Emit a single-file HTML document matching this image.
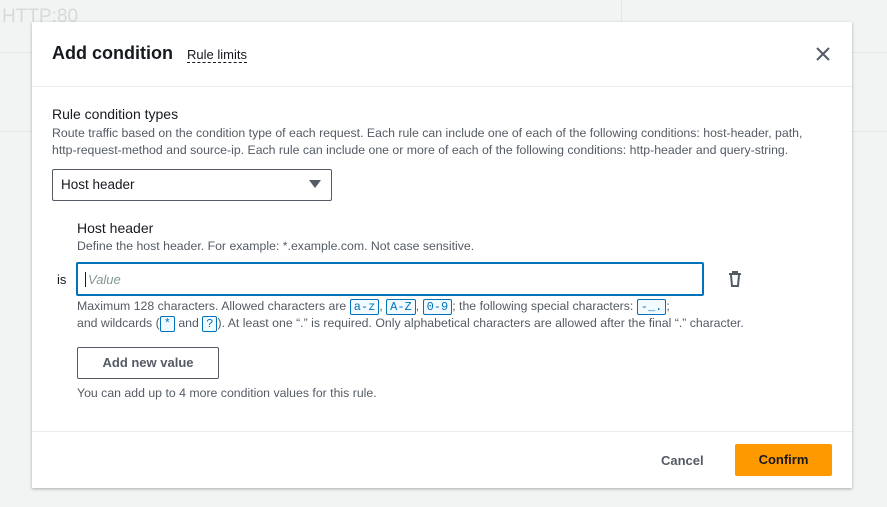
<!DOCTYPE html>
<html><head><style>
body{margin:0;width:887px;height:507px;background:#f2f3f3;font-family:"Liberation Sans",sans-serif;position:relative;overflow:hidden;color:#16191f}
.bg1{position:absolute;left:2px;top:6px;font-size:19px;color:#d5dbdb}
.ln{position:absolute;left:0;width:887px;height:1px;background:#e4e6e6}
.modal{position:absolute;left:32px;top:22px;width:820px;height:466px;background:#fff;box-shadow:0 1px 3px rgba(0,0,0,.3)}
.a{position:absolute;white-space:nowrap}
.code{display:inline-block;border:1px solid #0073bb;color:#0073bb;font-family:"Liberation Mono",monospace;font-size:12px;padding:0 3px;line-height:14px;border-radius:2px;background:#f1faff}
.s{font-size:12.3px;color:#545b64}
</style></head><body>
<div class="bg1">HTTP:80</div>
<div class="ln" style="top:52px"></div>
<div class="ln" style="top:131px"></div>
<div style="position:absolute;left:621px;top:0;width:1px;height:22px;background:#e4e6e6"></div>
<div class="modal">
 <div class="a" style="left:20px;top:21px;font-size:18px;font-weight:bold">Add condition</div>
 <div class="a" style="left:155px;top:25px;font-size:13px;border-bottom:1px dashed #16191f;line-height:15px">Rule limits</div>
 <svg class="a" style="left:784px;top:25px" width="14" height="14"><path d="M1 1L13 13M13 1L1 13" stroke="#545b64" stroke-width="2"/></svg>
 <div class="a" style="left:0;top:64px;width:820px;height:1px;background:#eaeded"></div>
 <div class="a" style="left:20px;top:84px;font-size:14px">Rule condition types</div>
 <div class="a s" style="left:20px;top:103px;line-height:17px">Route traffic based on the condition type of each request. Each rule can include one of each of the following conditions: host-header, path,<br>http-request-method and source-ip. Each rule can include one or more of each of the following conditions: http-header and query-string.</div>
 <div class="a" style="left:20px;top:147px;width:278px;height:30px;border:1px solid #545b64;border-radius:2px"></div>
 <div class="a" style="left:29px;top:155px;font-size:13.5px">Host header</div>
 <svg class="a" style="left:277px;top:158px" width="12" height="8"><path d="M0 0H12L6 8Z" fill="#545b64"/></svg>
 <div class="a" style="left:45px;top:198px;font-size:14px">Host header</div>
 <div class="a s" style="left:45px;top:217px">Define the host header. For example: *.example.com. Not case sensitive.</div>
 <div class="a" style="left:25px;top:250px;font-size:13px">is</div>
 <div class="a" style="left:44px;top:240px;width:624px;height:30px;border:2px solid #0073bb;border-radius:2px"></div>
 <div class="a" style="left:53px;top:250px;font-size:13px;font-style:italic;color:#879596;border-left:1px solid #16191f;padding-left:2px;line-height:15px">Value</div>
 <svg class="a" style="left:696px;top:249px" width="14" height="16"><path d="M1 3H13M5 3V1H9V3M3 4L4 15H10L11 4" stroke="#545b64" stroke-width="2" fill="none"/></svg>
 <div class="a s" style="left:45px;top:276px;line-height:17px">Maximum 128 characters. Allowed characters are <span class="code">a-z</span>, <span class="code">A-Z</span>, <span class="code">0-9</span>; the following special characters: <span class="code">-_.</span>;<br>and wildcards (<span class="code">*</span> and <span class="code">?</span>). At least one “.” is required. Only alphabetical characters are allowed after the final “.” character.</div>
 <div class="a" style="left:45px;top:325px;width:140px;height:30px;border:1px solid #545b64;border-radius:2px;font-size:13px;font-weight:bold;color:#545b64;text-align:center;line-height:30px">Add new value</div>
 <div class="a s" style="left:45px;top:364px">You can add up to 4 more condition values for this rule.</div>
 <div class="a" style="left:0;top:409px;width:820px;height:1px;background:#eaeded"></div>
 <div class="a" style="left:629px;top:431px;font-size:13px;font-weight:bold;color:#545b64">Cancel</div>
 <div class="a" style="left:703px;top:422px;width:97px;height:32px;border-radius:2px;font-size:13px;font-weight:bold;text-align:center;line-height:32px;background:#ff9900">Confirm</div>
</div>
</body></html>
